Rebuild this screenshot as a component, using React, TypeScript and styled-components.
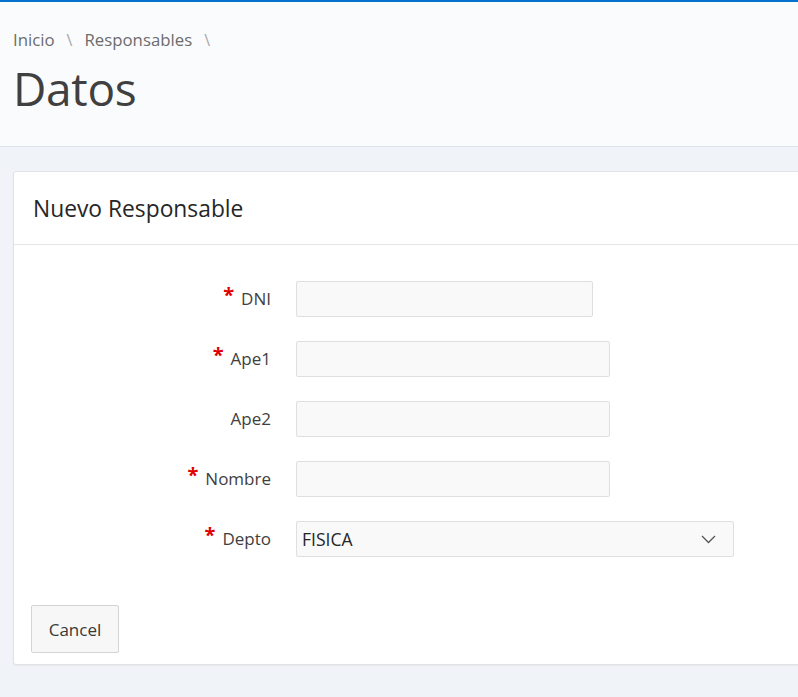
import React from "react";
import styled, { createGlobalStyle } from "styled-components";

const Global = createGlobalStyle`
  html, body { margin: 0; padding: 0; }
  body {
    background: #f0f4f8;
    font-family: "Open Sans", "Noto Sans", sans-serif;
    overflow: hidden;
    width: 798px;
    height: 697px;
  }
`;

const Page = styled.div`
  display: flex;
  flex-direction: column;
  min-height: 697px;
`;

const TopBar = styled.div`
  height: 2px;
  background: #0572ce;
`;

const Header = styled.header`
  background: #fafbfd;
  border-bottom: 1px solid #dfe4ea;
  padding: 27px 13px 0;
  height: 145px;
  box-sizing: border-box;
`;

const Crumbs = styled.nav`
  display: flex;
  align-items: center;
  gap: 12px;
  font-size: 16.8px;
  color: #6c6c6c;
  line-height: 22px;
`;

const Sep = styled.span`
  color: #a8a8a8;
  font-size: 16px;
`;

const Title = styled.h1`
  margin: 7px 0 0;
  font-size: 46px;
  font-weight: 400;
  color: #404040;
  line-height: 60px;
  letter-spacing: -0.3px;
`;

const Body = styled.main`
  padding: 24px 0 0 13px;
`;

const Card = styled.section`
  width: 1000px;
  background: #fff;
  border: 1px solid #e2e2e2;
  border-radius: 3px;
  box-shadow: 0 1px 2px rgba(0, 0, 0, 0.05);
`;

const CardHead = styled.div`
  height: 72px;
  border-bottom: 1px solid #e6e6e6;
  display: flex;
  align-items: center;
  padding-left: 19px;
`;

const CardTitle = styled.h2`
  margin: 0;
  font-size: 22.8px;
  font-weight: 400;
  color: #262626;
`;

const Form = styled.div`
  display: grid;
  grid-template-columns: 257px auto;
  column-gap: 25px;
  row-gap: 24px;
  padding: 36px 0 0;
  align-items: center;
  justify-items: start;
`;

const Label = styled.label`
  justify-self: end;
  font-size: 17px;
  color: #404040;
  display: flex;
  align-items: flex-start;
  gap: 7px;
  line-height: 22px;
`;

const Req = styled.span`
  color: #e00000;
  font-size: 20px;
  line-height: 14px;
  font-weight: 700;
`;

const Input = styled.div<{ $w: number }>`
  width: ${(p) => p.$w}px;
  height: 36px;
  box-sizing: border-box;
  background: #f9f9f9;
  border: 1px solid #dfdfdf;
  border-radius: 2px;
`;

const Select = styled.div`
  width: 438px;
  height: 36px;
  box-sizing: border-box;
  background: #f9f9f9;
  border: 1px solid #dfdfdf;
  border-radius: 2px;
  display: flex;
  align-items: center;
  justify-content: space-between;
  padding: 0 17px 0 5px;
  font-size: 17.5px;
  color: #262626;
`;

const Footer = styled.div`
  padding: 48px 0 11px 17px;
`;

const Button = styled.button`
  width: 88px;
  height: 48px;
  background: #f7f7f7;
  border: 1px solid #d4d4d4;
  border-radius: 2px;
  font-family: inherit;
  font-size: 17px;
  color: #383838;
  padding: 0;
`;

const Chevron = () => (
  <svg width="15" height="9" viewBox="0 0 15 9" fill="none">
    <path d="M1 1l6.5 6.5L14 1" stroke="#555" strokeWidth="1.3" />
  </svg>
);

const Req1 = () => <Req>*</Req>;

export default function App() {
  return (
    <Page>
      <Global />
      <TopBar />
      <Header>
        <Crumbs>
          <span>Inicio</span>
          <Sep>\</Sep>
          <span>Responsables</span>
          <Sep>\</Sep>
        </Crumbs>
        <Title>Datos</Title>
      </Header>
      <Body>
        <Card>
          <CardHead>
            <CardTitle>Nuevo Responsable</CardTitle>
          </CardHead>
          <Form>
            <Label>
              <Req1 />
              DNI
            </Label>
            <Input $w={297} />
            <Label>
              <Req1 />
              Ape1
            </Label>
            <Input $w={314} />
            <Label>Ape2</Label>
            <Input $w={314} />
            <Label>
              <Req1 />
              Nombre
            </Label>
            <Input $w={314} />
            <Label>
              <Req1 />
              Depto
            </Label>
            <Select>
              <span>FISICA</span>
              <Chevron />
            </Select>
          </Form>
          <Footer>
            <Button>Cancel</Button>
          </Footer>
        </Card>
      </Body>
    </Page>
  );
}
